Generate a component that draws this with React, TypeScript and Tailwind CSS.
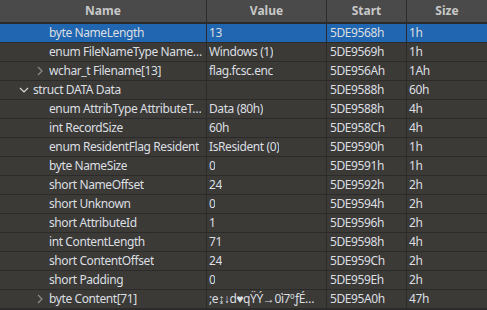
import React from "react";

type Row = {
  name: string;
  value: string;
  start: string;
  size: string;
  level: number;
  expander?: "open" | "closed";
  selected?: boolean;
};

const rows: Row[] = [
  { name: "byte NameLength", value: "13", start: "5DE9568h", size: "1h", level: 2, selected: true },
  { name: "enum FileNameType Name…", value: "Windows (1)", start: "5DE9569h", size: "1h", level: 2 },
  { name: "wchar_t Filename[13]", value: "flag.fcsc.enc", start: "5DE956Ah", size: "1Ah", level: 2, expander: "closed" },
  { name: "struct DATA Data", value: "", start: "5DE9588h", size: "60h", level: 1, expander: "open" },
  { name: "enum AttribType AttributeT…", value: "Data (80h)", start: "5DE9588h", size: "4h", level: 2 },
  { name: "int RecordSize", value: "60h", start: "5DE958Ch", size: "4h", level: 2 },
  { name: "enum ResidentFlag Resident", value: "IsResident (0)", start: "5DE9590h", size: "1h", level: 2 },
  { name: "byte NameSize", value: "0", start: "5DE9591h", size: "1h", level: 2 },
  { name: "short NameOffset", value: "24", start: "5DE9592h", size: "2h", level: 2 },
  { name: "short Unknown", value: "0", start: "5DE9594h", size: "2h", level: 2 },
  { name: "short AttributeId", value: "1", start: "5DE9596h", size: "2h", level: 2 },
  { name: "int ContentLength", value: "71", start: "5DE9598h", size: "4h", level: 2 },
  { name: "short ContentOffset", value: "24", start: "5DE959Ch", size: "2h", level: 2 },
  { name: "short Padding", value: "0", start: "5DE959Eh", size: "2h", level: 2 },
  { name: "byte Content[71]", value: ";e↨↓d♥qŸÝ→0ì7ºƒÉ…", start: "5DE95A0h", size: "47h", level: 2, expander: "closed" },
];

function Chevron({ kind }: { kind: "open" | "closed" }) {
  if (kind === "open") {
    return (
      <svg width="10" height="10" viewBox="0 0 10 10" className="shrink-0">
        <polyline points="1,3 5,7 9,3" fill="none" stroke="#d8d8d8" strokeWidth="1.2" />
      </svg>
    );
  }
  return (
    <svg width="10" height="10" viewBox="0 0 10 10" className="shrink-0">
      <polyline points="3,1 7,5 3,9" fill="none" stroke="#8c8c8c" strokeWidth="1.2" />
    </svg>
  );
}

export default function App() {
  return (
    <div
      className="w-[487px] h-[310px] overflow-hidden bg-[#2b2b2b] flex flex-col gap-px text-[12px] leading-[18px] tracking-[-0.4px]"
      style={{ fontFamily: '"Noto Sans", "Open Sans", sans-serif' }}
    >
      <div className="grid grid-cols-[206px_119px_79px_80px] gap-x-px h-[22px] mb-px shrink-0 font-bold text-[#c8c8c8] tracking-normal">
        <div className="bg-[#4a4a4a] flex items-center justify-center">Name</div>
        <div className="bg-[#4a4a4a] flex items-center justify-center">Value</div>
        <div className="bg-[#4a4a4a] flex items-center justify-center">Start</div>
        <div className="bg-[#4a4a4a] flex items-center justify-center">Size</div>
      </div>
      {rows.map((r, i) => {
        const bg = r.selected ? "bg-[#2166b0]" : "bg-[#3b3a37]";
        return (
          <div key={i} className="grid grid-cols-[206px_119px_79px_80px] gap-x-px h-[18px] shrink-0 text-[#dcdfe2]">
            <div className={`${bg} flex items-center overflow-hidden whitespace-nowrap ${r.level === 1 ? "pl-[19px]" : "pl-[35px]"}`}>
              <span className="w-[14px] shrink-0 flex items-center">
                {r.expander ? <Chevron kind={r.expander} /> : null}
              </span>
              <span className="truncate min-w-0 leading-[18px]">{r.name}</span>
            </div>
            <div className={`${bg} flex items-center pl-[2px] overflow-hidden whitespace-nowrap`}>
              <span className="truncate min-w-0 leading-[18px]">{r.value}</span>
            </div>
            <div className={`${bg} flex items-center pl-[3px] whitespace-nowrap`}>{r.start}</div>
            <div className={`${bg} flex items-center pl-[2px] whitespace-nowrap`}>{r.size}</div>
          </div>
        );
      })}
    </div>
  );
}
